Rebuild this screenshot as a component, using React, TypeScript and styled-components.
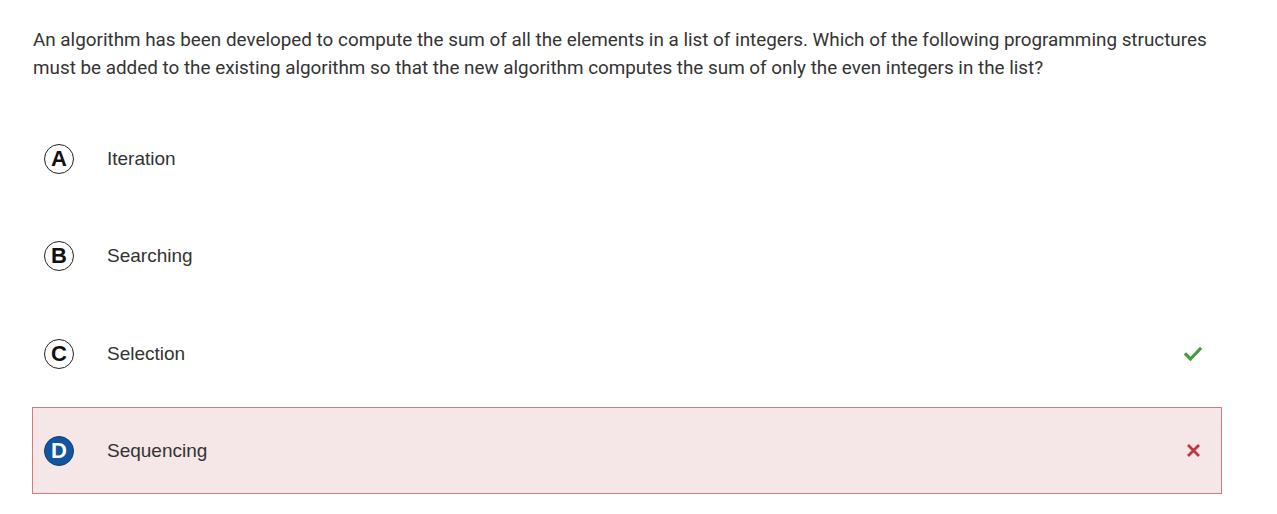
import * as React from 'react';
import styled, { createGlobalStyle } from 'styled-components';

const GlobalStyle = createGlobalStyle`
  html, body {
    margin: 0;
    padding: 0;
    background: #ffffff;
  }
`;

const Page = styled.div`
  width: 1190px;
  padding: 26px 0 0 32px;
`;

const Question = styled.p`
  margin: 0 0 33px 1px;
  font-family: Roboto, 'Liberation Sans', sans-serif;
  font-size: 18.85px;
  line-height: 28px;
  color: #333333;
  white-space: nowrap;
`;

const Options = styled.div`
  display: flex;
  flex-direction: column;
  gap: 10.3px;
`;

const Row = styled.div<{ $wrong?: boolean }>`
  display: flex;
  align-items: center;
  height: 87px;
  box-sizing: border-box;
  padding: 1px 18px 0 11px;
  border: 1px solid ${p => (p.$wrong ? '#cf7d83' : 'transparent')};
  background: ${p => (p.$wrong ? '#f5e6e7' : 'transparent')};
`;

const Letter = styled.span<{ $selected?: boolean }>`
  display: flex;
  align-items: center;
  justify-content: center;
  width: 30px;
  height: 30px;
  box-sizing: border-box;
  border-radius: 50%;
  border: 1.2px solid ${p => (p.$selected ? '#0d3d73' : '#222222')};
  background: ${p => (p.$selected ? '#11569e' : '#ffffff')};
  color: ${p => (p.$selected ? '#ffffff' : '#111111')};
  font-family: 'Liberation Sans', Arial, sans-serif;
  font-weight: 700;
  font-size: 22px;
  line-height: 1;
`;

const Label = styled.span`
  flex: 1;
  margin-left: 33px;
  font-family: 'Liberation Sans', Arial, sans-serif;
  font-size: 19px;
  color: #333333;
`;

const Mark = styled.span`
  display: flex;
  width: 20px;
  justify-content: center;
`;

const Check = () => (
  <svg width="18" height="14" viewBox="0 0 18 14">
    <path d="M2 7.5 L6.5 12 L16 2" fill="none" stroke="#4b9b44" strokeWidth="3.2" strokeLinecap="square" />
  </svg>
);

const Cross = () => (
  <svg width="15" height="15" viewBox="0 0 15 15">
    <path d="M2 2 L13 13 M13 2 L2 13" fill="none" stroke="#c0353e" strokeWidth="2.8" />
  </svg>
);

const options = [
  { key: 'A', text: 'Iteration' },
  { key: 'B', text: 'Searching' },
  { key: 'C', text: 'Selection', correct: true },
  { key: 'D', text: 'Sequencing', selected: true, wrong: true },
];

function App() {
  return (
    <>
      <GlobalStyle />
      <Page>
        <Question>
          An algorithm has been developed to compute the sum of all the elements in a list of integers. Which of the following programming structures
          <br />
          must be added to the existing algorithm so that the new algorithm computes the sum of only the even integers in the list?
        </Question>
        <Options>
          {options.map(o => (
            <Row key={o.key} $wrong={o.wrong}>
              <Letter $selected={o.selected}>{o.key}</Letter>
              <Label>{o.text}</Label>
              <Mark>
                {o.correct && <Check />}
                {o.wrong && <Cross />}
              </Mark>
            </Row>
          ))}
        </Options>
      </Page>
    </>
  );
}

export default App;
